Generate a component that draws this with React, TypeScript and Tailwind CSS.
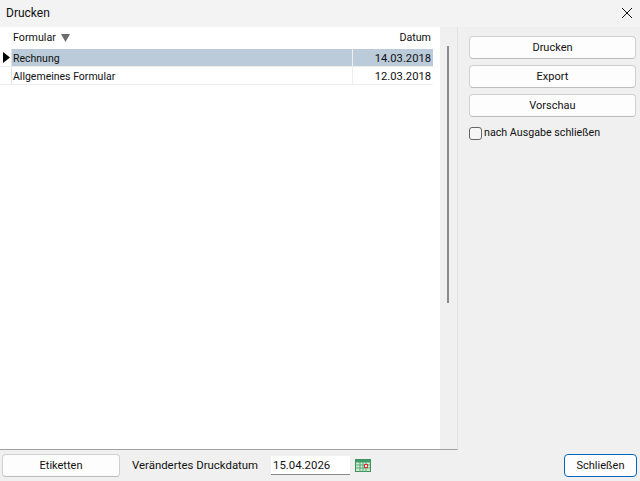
import React from "react";

function Btn({ label, className = "" }: { label: string; className?: string }) {
  return (
    <button
      className={`flex items-center justify-center rounded-[4px] border border-[#d0d0d0] border-b-[#bcbcbc] bg-[#fdfdfd] pt-[2px] text-[11px] text-[#111] ${className}`}
    >
      {label}
    </button>
  );
}

function Row({ name, date, selected }: { name: string; date: string; selected?: boolean }) {
  return (
    <div className="flex h-[18px] w-[433px] border-b border-[#ececec]">
      <div className="flex w-[12px] items-center border-r border-[#e2e2e2] pl-[3px]">
        {selected && (
          <svg width="7" height="11" viewBox="0 0 7 11">
            <path d="M0 0 L7 5.5 L0 11 Z" fill="#000" />
          </svg>
        )}
      </div>
      <div className={`flex flex-1 items-center pl-[1px] pt-[3px] text-[10.5px] ${selected ? "bg-[#bccbda]" : ""}`}>
        {name}
      </div>
      <div
        className={`flex w-[81px] items-center justify-end border-l border-[#eeeeee] pr-[2px] pt-[3px] text-[11.2px] ${selected ? "bg-[#bccbda]" : ""}`}
      >
        {date}
      </div>
    </div>
  );
}

export default function App() {
  return (
    <div className="flex h-[481px] w-[640px] flex-col overflow-hidden bg-[#f0f0f0] font-['Roboto',sans-serif] text-[12px] text-[#111]">
      {/* titel */}
      <div className="flex h-[27px] items-center justify-between bg-[#f3f3f3] pb-[2px] pl-[6px] pr-[7px]">
        <span>Drucken</span>
        <svg width="12" height="12" viewBox="0 0 12 12">
          <path d="M1 1 L11 11 M11 1 L1 11" stroke="#111" strokeWidth="1" fill="none" />
        </svg>
      </div>

      <div className="flex h-[423px]">
        {/* liste */}
        <div className="flex w-[458px] border-b border-r border-b-[#a0a0a0] border-r-[#e2e2e2]">
          <div className="flex-1 bg-white">
            <div className="flex h-[22px] w-[433px] items-center justify-between pl-[13px] pr-[2px] pt-[1px] text-[10.7px]">
              <div className="flex items-center gap-[5px]">
                <span>Formular</span>
                <svg width="9" height="8" viewBox="0 0 9 8">
                  <path d="M0 0 H9 L4.5 8 Z" fill="#6d6d6d" />
                </svg>
              </div>
              <span>Datum</span>
            </div>
            <Row name="Rechnung" date="14.03.2018" selected />
            <Row name="Allgemeines Formular" date="12.03.2018" />
          </div>
          <div className="w-[17px] bg-[#f0f0f0] pl-[7px] pt-[19px]">
            <div className="h-[257px] w-[2px] bg-[#8a8a8a]" />
          </div>
        </div>

        {/* aktionen */}
        <div className="flex flex-1 flex-col gap-[6px] pl-[11px] pr-[4px] pt-[9px]">
          <Btn label="Drucken" className="h-[23px]" />
          <Btn label="Export" className="h-[23px]" />
          <Btn label="Vorschau" className="h-[23px]" />
          <label className="mt-[3px] flex h-[14px] items-center gap-[2px] text-[10.7px]">
            <span className="h-[13px] w-[13px] rounded-[3px] border border-[#666] bg-[#f6f6f6]" />
            <span className="pt-[1px]">nach Ausgabe schließen</span>
          </label>
        </div>
      </div>

      {/* fuss */}
      <div className="flex flex-1 items-center pl-[2px] pr-[3px]">
        <Btn label="Etiketten" className="h-[23px] w-[118px]" />
        <span className="ml-[12px] w-[139px] pt-[1px] text-[11.4px]">Verändertes Druckdatum</span>
        <div className="flex h-[19px] w-[79px] items-center border-b border-[#8a8a8a] bg-white pl-[2px] pt-[1px] text-[11.4px]">
          15.04.2026
        </div>
        <svg width="16" height="13" viewBox="0 0 16 13" className="ml-[5px]">
          <rect x="0.5" y="0.5" width="15" height="12" fill="#cfeccf" stroke="#3f8f5f" />
          <rect x="0.5" y="0.5" width="15" height="3" fill="#3f9a68" />
          <path d="M5 3 V13 M8 3 V13 M11 3 V13 M1 6 H15 M1 9 H15" stroke="#5aa97c" strokeWidth="1" />
          <rect x="9.5" y="5.5" width="3" height="3" fill="#fff" stroke="#e03030" />
        </svg>
        <Btn
          label="Schließen"
          className="ml-auto h-[23px] w-[73px] !border-[#0067c0] !border-b-[#0067c0]"
        />
      </div>
    </div>
  );
}
